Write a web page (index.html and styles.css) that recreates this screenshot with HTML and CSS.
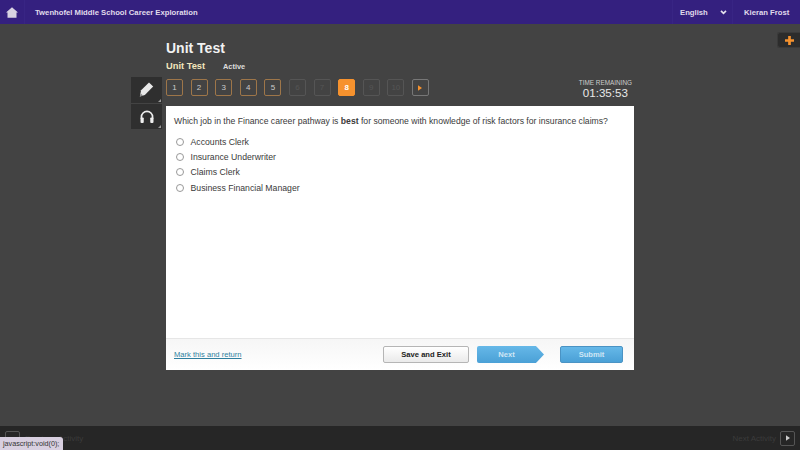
FILE: index.html
```html
<!DOCTYPE html>
<html>
<head>
    <meta name="viewport" content="width=device-width, initial-scale=1.0">
    <link rel="stylesheet" href="styles.css">
</head>
<body>
    <header class="topbar">
        <a class="home-btn">
            <svg width="12" height="11" viewBox="0 0 16 14"><path d="M8 0 L16 7 H14 V14 H2 V7 H0 Z" fill="#d8d3e2"/></svg>
        </a>
        <div class="school">Twenhofel Middle School Career Exploration</div>
        <div class="lang">English
            <svg width="7" height="5" viewBox="0 0 8 6"><path d="M1 1 L4 4 L7 1" fill="none" stroke="#e6e2ee" stroke-width="2"/></svg>
        </div>
        <div class="user">Kieran Frost</div>
    </header>

    <button class="plus-btn">
        <svg width="9" height="9" viewBox="0 0 10 10"><path d="M3.5 0 H6.5 V3.5 H10 V6.5 H6.5 V10 H3.5 V6.5 H0 V3.5 H3.5 Z" fill="#f6922e"/></svg>
    </button>

    <main class="page">
        <div class="exam">
            <div class="titles">
                <h1>Unit Test</h1>
                <div class="sub"><span class="sub-name">Unit Test</span><span class="status">Active</span></div>
            </div>

            <div class="tools">
                <button class="tool">
                    <svg width="15" height="15" viewBox="0 0 17 18"><path d="M11.5 0.5 L16.5 5.5 L6.5 15.5 L0.5 17.5 L2 10 Z" fill="#e8e8e8"/><path d="M0.5 17.5 L1.5 13.5 L4.5 16.5 Z" fill="#8a8a8a"/></svg>
                </button>
                <button class="tool">
                    <svg width="16" height="13" viewBox="0 0 16 14"><path d="M2 9 V7.5 A6 6 0 0 1 14 7.5 V9" fill="none" stroke="#eee" stroke-width="1.8"/><rect x="1" y="8" width="3.5" height="6" rx="1" fill="#eee"/><rect x="11.5" y="8" width="3.5" height="6" rx="1" fill="#eee"/></svg>
                </button>
            </div>

            <div class="nav-row">
                <div class="steps">
                    <a class="step done">1</a>
                    <a class="step done">2</a>
                    <a class="step done">3</a>
                    <a class="step done">4</a>
                    <a class="step done">5</a>
                    <a class="step off">6</a>
                    <a class="step off">7</a>
                    <a class="step now">8</a>
                    <a class="step off">9</a>
                    <a class="step off">10</a>
                    <a class="step arrow"><svg width="4" height="6" viewBox="0 0 5 7"><path d="M0 0 L5 3.5 L0 7 Z" fill="#f6922e"/></svg></a>
                </div>
                <div class="timer">
                    <div class="timer-label">TIME REMAINING</div>
                    <div class="timer-value">01:35:53</div>
                </div>
            </div>

            <section class="card">
                <div class="question">
                    <p class="prompt">Which job in the Finance career pathway is <b>best</b> for someone with knowledge of risk factors for insurance claims?</p>
                    <label class="answer"><span class="radio"></span>Accounts Clerk</label>
                    <label class="answer"><span class="radio"></span>Insurance Underwriter</label>
                    <label class="answer"><span class="radio"></span>Claims Clerk</label>
                    <label class="answer"><span class="radio"></span>Business Financial Manager</label>
                </div>
                <div class="card-foot">
                    <a class="mark">Mark this and return</a>
                    <button class="btn save">Save and Exit</button>
                    <button class="btn next">Next</button>
                    <button class="btn submit">Submit</button>
                </div>
            </section>
        </div>
    </main>

    <footer class="bottombar">
        <div class="foot-side">
            <a class="foot-btn"></a>
            <span class="foot-text foot-prev">Previous Activity</span>
        </div>
        <div class="foot-side">
            <span class="foot-text">Next Activity</span>
            <a class="foot-btn"><svg width="4" height="6" viewBox="0 0 5 7"><path d="M0 0 L5 3.5 L0 7 Z" fill="#ccc"/></svg></a>
        </div>
    </footer>

    <div class="status-tip">javascript:void(0);</div>
</body>
</html>
```

FILE: styles.css
```css
* {
    margin: 0;
    padding: 0;
    box-sizing: border-box;
    font-family: 'Liberation Sans', Arial, sans-serif;
}

body {
    height: 100vh;
    background: #434343;
    display: flex;
    flex-direction: column;
    overflow: hidden;
    position: relative;
}

.topbar {
    height: 24px;
    background: #34207f;
    display: flex;
    align-items: center;
    color: #e0dcec;
    font-size: 7.7px;
    font-weight: bold;
    flex-shrink: 0;
}

.home-btn {
    width: 25px;
    height: 24px;
    display: flex;
    align-items: center;
    justify-content: center;
    border-right: 1px solid #382584;
}

.school {
    margin-left: 10px;
    flex: 1;
}

.lang {
    width: 61px;
    height: 24px;
    padding-left: 7px;
    display: flex;
    align-items: center;
    gap: 12px;
    border-left: 1px solid #382584;
    border-right: 1px solid #382584;
}

.user {
    width: 67px;
    padding-left: 11px;
}

.plus-btn {
    position: absolute;
    top: 32px;
    right: 0;
    width: 23px;
    height: 16px;
    background: #2c2c2c;
    border: 1px solid #3a3a3a;
    border-right: none;
    border-radius: 3px 0 0 3px;
    display: flex;
    align-items: center;
    justify-content: center;
}

.page {
    flex: 1;
    padding-left: 131px;
}

.exam {
    width: 503px;
    display: grid;
    grid-template-columns: 35px 468px;
    grid-template-rows: 53px 29px 264px;
}

.titles {
    grid-column: 2;
    grid-row: 1;
    padding-top: 16px;
}

h1 {
    color: #f2f2f2;
    font-size: 14px;
    line-height: 17px;
}

.sub {
    margin-top: 4px;
    display: flex;
    align-items: center;
}

.sub-name {
    color: #f3e6bd;
    font-size: 9.3px;
    font-weight: bold;
    width: 57px;
}

.status {
    color: #ddd;
    font-size: 7.4px;
    font-weight: bold;
}

.tools {
    grid-column: 1;
    grid-row: 2 / 4;
    display: flex;
    flex-direction: column;
    gap: 1px;
}

.tool {
    width: 31px;
    height: 25.5px;
    background: #2f2f2f;
    border: none;
    display: flex;
    align-items: center;
    justify-content: center;
    position: relative;
}

.tool::after {
    content: '';
    position: absolute;
    right: 1px;
    bottom: 1px;
    border-left: 3px solid transparent;
    border-bottom: 3px solid #999;
}

.nav-row {
    grid-column: 2;
    grid-row: 2;
    display: flex;
    justify-content: space-between;
}

.steps {
    display: flex;
    gap: 7.6px;
    padding-top: 2px;
}

.step {
    width: 17px;
    height: 17px;
    border: 1px solid #555;
    border-radius: 2px;
    font-size: 8px;
    line-height: 15px;
    text-align: center;
    color: #555;
}

.step.done {
    border-color: #9e7649;
    color: #ccc;
}

.step.now {
    background: #f6922e;
    border-color: #f6922e;
    color: #fff;
    font-weight: bold;
}

.step.arrow {
    border-color: #777;
    display: flex;
    align-items: center;
    justify-content: center;
}

.timer {
    text-align: center;
    color: #e8e8e8;
    margin-right: 2px;
    padding-top: 2px;
}

.timer-label {
    font-size: 6.4px;
    line-height: 7px;
    color: #ccc;
}

.timer-value {
    font-size: 11.6px;
    line-height: 14px;
}

.card {
    grid-column: 2;
    grid-row: 3;
    background: #fff;
    display: flex;
    flex-direction: column;
}

.question {
    flex: 1;
    padding: 9px 8px 0;
    color: #3a3a3a;
}

.prompt {
    font-size: 8.65px;
    line-height: 12px;
    margin-bottom: 7px;
    white-space: nowrap;
}

.answer {
    display: flex;
    align-items: center;
    height: 15.3px;
    font-size: 8.7px;
    padding-left: 2px;
}

.radio {
    width: 8px;
    height: 8px;
    border: 1px solid #999;
    border-radius: 50%;
    margin-right: 6.5px;
}

.card-foot {
    height: 32px;
    background: linear-gradient(#f6f6f6, #fff);
    border-top: 1px solid #e6e6e6;
    display: flex;
    align-items: center;
    padding: 0 11px 0 8px;
}

.mark {
    color: #2f7f9e;
    font-size: 7.6px;
    text-decoration: underline;
    width: 209px;
}

.btn {
    height: 17px;
    font-size: 7.6px;
    font-weight: bold;
    border-radius: 2px;
    text-align: center;
}

.save {
    width: 86px;
    background: linear-gradient(#fff, #eaeaea);
    border: 1px solid #b5b5b5;
    color: #222;
}

.next {
    width: 67px;
    margin-left: 8px;
    border: none;
    color: #cfe6f5;
    background: linear-gradient(#66b8e8, #4aa0d6);
    clip-path: polygon(0 0, 88% 0, 100% 50%, 88% 100%, 0 100%);
    padding-right: 8px;
}

.submit {
    width: 63px;
    margin-left: 16px;
    border: 1px solid #4a93c4;
    color: #cfe6f5;
    background: linear-gradient(#66b8e8, #4aa0d6);
}

.bottombar {
    height: 24px;
    background: #262626;
    display: flex;
    justify-content: space-between;
    align-items: center;
    padding: 0 5px;
    flex-shrink: 0;
}

.foot-side {
    display: flex;
    align-items: center;
    gap: 4px;
}

.foot-btn {
    width: 15px;
    height: 15px;
    border: 1px solid #555;
    border-radius: 2px;
    display: flex;
    align-items: center;
    justify-content: center;
}

.foot-text {
    color: #3b3b3b;
    font-size: 8px;
}

.foot-prev {
    margin-left: 1px;
}

.status-tip {
    position: absolute;
    left: 0;
    bottom: 0;
    height: 13px;
    width: 63px;
    background: #d8cfe0;
    border-radius: 0 3px 0 0;
    color: #333;
    font-size: 7.2px;
    line-height: 13px;
    padding-left: 3px;
    white-space: nowrap;
}
```
